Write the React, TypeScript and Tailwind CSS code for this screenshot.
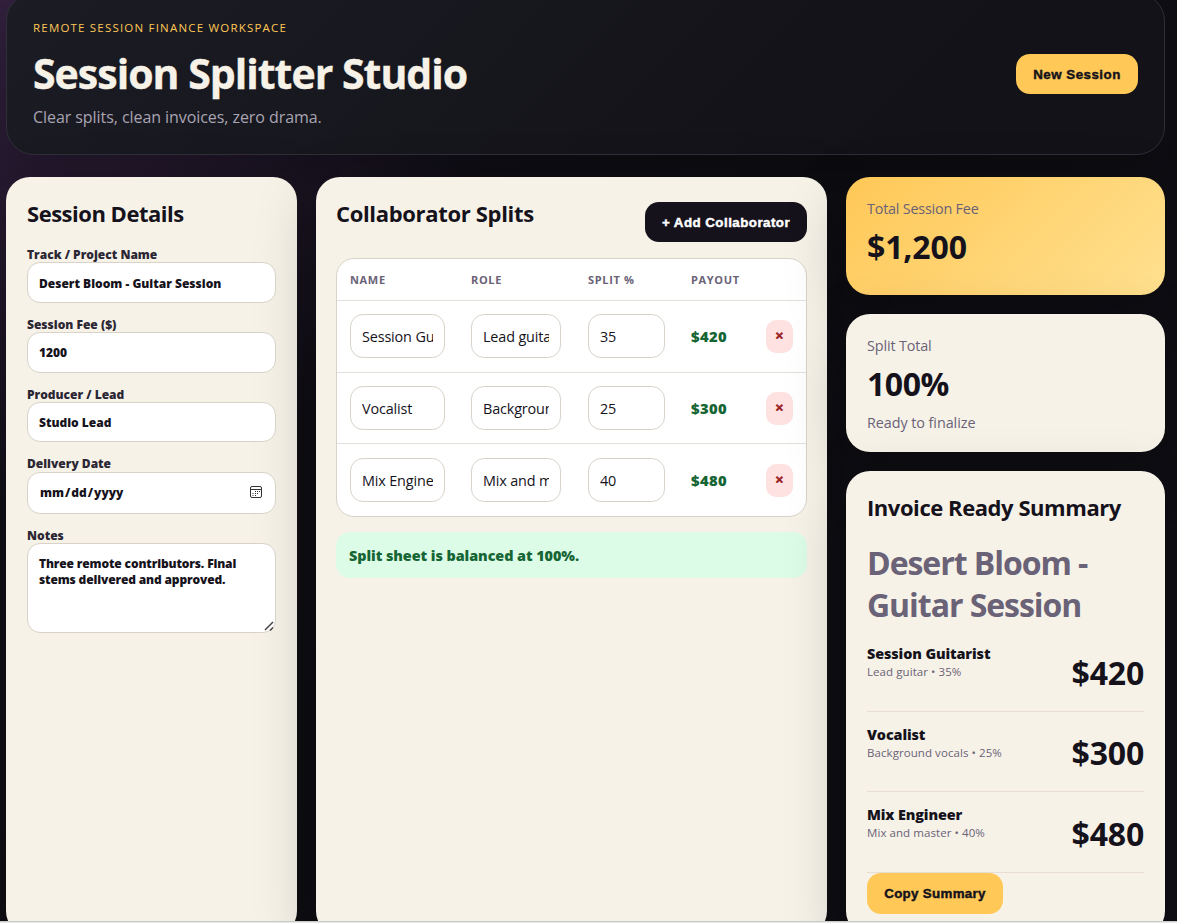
import { useState } from "react";

type Collaborator = {
    id: number;
    name: string;
    role: string;
    split: number;
};

const initialCollaborators: Collaborator[] = [
    { id: 1, name: "Session Guitarist", role: "Lead guitar", split: 35 },
    { id: 2, name: "Vocalist", role: "Background vocals", split: 25 },
    { id: 3, name: "Mix Engineer", role: "Mix and master", split: 40 },
];

const panelShadow = "shadow-[0_20px_60px_rgba(0,0,0,0.25)]";
const fieldClass =
    "block w-full rounded-[13px] border border-[#d8d2c9] bg-white px-[11px] text-[12px] font-extrabold text-[#15121b] outline-none";
const cellClass =
    "block h-[44px] rounded-[13px] border border-[#d8d2c9] bg-white px-[11px] pt-px text-[14.4px] tracking-[-0.01em] text-[#15121b] outline-none";
const buttonClass =
    "shrink-0 rounded-[14px] pt-[2px] text-center font-['Liberation_Sans',Arial,sans-serif] text-[13.33px] font-black whitespace-nowrap [-webkit-text-stroke:0.45px_currentColor]";

function CalendarIcon() {
    return (
        <svg className="pointer-events-none absolute top-[14px] right-[14px]" width="12" height="12" viewBox="0 0 12 12" fill="none" stroke="#333">
            <rect x="0.5" y="0.5" width="11" height="11" rx="1.5" />
            <path d="M1 3.5h10" />
            <path d="M5 5.5h1M7 5.5h1M9 5.5h1M2.5 7.5h1M5 7.5h1M7 7.5h1M2.5 9.5h1M5 9.5h1" />
        </svg>
    );
}

function ResizeHandle() {
    return (
        <svg className="pointer-events-none absolute right-[2px] bottom-[2px]" width="10" height="10" viewBox="0 0 10 10" stroke="#444" strokeWidth="1.5">
            <path d="M1 9 9 1M6 9.5 9 6.5" />
        </svg>
    );
}

function Field({ label, children }: { label: string; children: React.ReactNode }) {
    return (
        <label className="block">
            <span className="block h-[17.3px] text-[12px] leading-[19px] font-extrabold text-[#2b2633]">
                {label}
            </span>
            <span className="relative block">{children}</span>
        </label>
    );
}

export default function App() {
    const [collaborators, setCollaborators] = useState(initialCollaborators);
    const [project, setProject] = useState("Desert Bloom - Guitar Session");
    const [fee, setFee] = useState(1200);

    const total = collaborators.reduce((sum, c) => sum + c.split, 0);
    const payout = (split: number) => "$" + Math.round((fee * split) / 100).toLocaleString("en-US");

    const update = (id: number, changes: Partial<Collaborator>) => {
        setCollaborators(prev => prev.map(c => (c.id === id ? { ...c, ...changes } : c)));
    };

    const addCollaborator = () => {
        setCollaborators(prev => [...prev, { id: Date.now(), name: "", role: "", split: 0 }]);
    };

    return (
        <div className="flex h-[923px] w-[1177px] flex-col overflow-hidden bg-[#e9e9e9] font-['Open_Sans','Noto_Sans',sans-serif] text-[#15121b]">
            <div className="h-[921px] shrink-0 overflow-hidden bg-[radial-gradient(circle_at_0_-20px,#342140_0,transparent_520px),linear-gradient(135deg,#13111b,#0f0e13_50%,#100f16)] pr-3 pl-1.5">
                <header className="-mt-[7px] flex h-[162px] items-center justify-between rounded-[28px] border border-[#302e38] bg-[linear-gradient(135deg,#1b1c24,#131218_75%)] px-[26px] shadow-[0_20px_60px_rgba(0,0,0,0.25)]">
                    <div className="h-[114px]">
                        <p className="h-[24px] text-[11.5px] leading-[22px] tracking-[0.104em] text-[#ffc857]">
                            REMOTE SESSION FINANCE WORKSPACE
                        </p>
                        <h1 className="mt-[5px] h-[54px] text-[41px] leading-[54px] font-bold tracking-[-0.024em] text-[#f7f2e8] [-webkit-text-stroke:0.4px_currentColor]">
                            Session Splitter Studio
                        </h1>
                        <p className="mt-[5px] text-[16px] leading-[24px] tracking-[-0.004em] text-[#a9a4b3]">
                            Clear splits, clean invoices, zero drama.
                        </p>
                    </div>
                    <button className={`${buttonClass} h-10 w-[122px] bg-[#ffc857] tracking-[0.037em] text-[#15121b]`}>New Session</button>
                </header>

                <main className="mt-[22px] grid h-[758px] grid-cols-[291px_511px_319px] gap-[19px]">
                    <section className={`rounded-3xl bg-[#f7f2e8] px-[21px] pt-5 ${panelShadow}`}>
                        <h2 className="h-12 text-[22px] leading-[32px] font-bold tracking-[-0.022em]">Session Details</h2>
                        <div className="flex flex-col gap-3">
                            <Field label="Track / Project Name">
                                <input className={`${fieldClass} h-[40.5px] pt-px`} value={project} onChange={e => setProject(e.target.value)} />
                            </Field>
                            <Field label="Session Fee ($)">
                                <input className={`${fieldClass} h-[40.5px]`} value={fee} onChange={e => setFee(Number(e.target.value))} />
                            </Field>
                            <Field label="Producer / Lead">
                                <input className={`${fieldClass} h-[40.5px]`} defaultValue="Studio Lead" />
                            </Field>
                            <Field label="Delivery Date">
                                <input
                                    type="date"
                                    className={`${fieldClass} h-[42.5px] [&::-webkit-calendar-picker-indicator]:opacity-0`}
                                />
                                <CalendarIcon />
                            </Field>
                            <Field label="Notes">
                                <textarea
                                    className={`${fieldClass} h-[90px] resize-none py-[12px] leading-[16px] tracking-[-0.012em]`}
                                    defaultValue="Three remote contributors. Final stems delivered and approved."
                                />
                                <ResizeHandle />
                            </Field>
                        </div>
                    </section>

                    <section className={`rounded-3xl bg-[#f7f2e8] px-5 pt-5 ${panelShadow}`}>
                        <div className="flex h-[61px] items-start justify-between">
                            <h2 className="text-[22px] leading-[32px] font-bold tracking-[-0.015em]">Collaborator Splits</h2>
                            <button onClick={addCollaborator} className={`${buttonClass} mt-[5px] h-10 w-[162px] bg-[#15121b] tracking-[0.035em] text-white`}>
                                + Add Collaborator
                            </button>
                        </div>
                        <div className="overflow-hidden rounded-[18px] border border-[#d8d2c9] bg-white">
                            <div className="grid h-[42px] grid-cols-[121px_117px_103px_75px_27px] items-center border-b border-[#e3dfd9] pt-px pl-[13px] text-[11px] font-bold tracking-[0.06em] text-[#6a6277]">
                                <span>NAME</span>
                                <span>ROLE</span>
                                <span>SPLIT %</span>
                                <span>PAYOUT</span>
                            </div>
                            {collaborators.map(c => (
                                <div
                                    key={c.id}
                                    className="grid h-[71.7px] grid-cols-[121px_117px_103px_75px_27px] items-center border-b border-[#e3dfd9] pl-[13px] last:border-b-0"
                                >
                                    <input className={`${cellClass} w-[95px]`} value={c.name} onChange={e => update(c.id, { name: e.target.value })} />
                                    <input className={`${cellClass} w-[90px]`} value={c.role} onChange={e => update(c.id, { role: e.target.value })} />
                                    <input
                                        className={`${cellClass} w-[77px]`}
                                        value={c.split}
                                        onChange={e => update(c.id, { split: Number(e.target.value) })}
                                    />
                                    <span className="text-[14.8px] font-extrabold tracking-[0.028em] text-[#166534]">{payout(c.split)}</span>
                                    <button
                                        onClick={() => setCollaborators(prev => prev.filter(p => p.id !== c.id))}
                                        className="h-[33px] rounded-[10px] bg-[#fee2e2] font-['Liberation_Sans',Arial,sans-serif] text-[13.33px] font-black text-[#991b1b] [-webkit-text-stroke:0.5px_currentColor]"
                                    >
                                        ×
                                    </button>
                                </div>
                            ))}
                        </div>
                        <div className="mt-[15px] flex h-[46px] items-center rounded-[14px] bg-[#dcfce7] px-[13px] pt-px text-[14.4px] font-extrabold tracking-[-0.004em] text-[#166534]">
                            {total === 100 ? "Split sheet is balanced at 100%." : `Split sheet is at ${total}%.`}
                        </div>
                    </section>

                    <aside className="flex flex-col gap-[19px]">
                        <div className={`h-[118px] shrink-0 rounded-3xl bg-[linear-gradient(135deg,#ffc857,#ffe08f)] px-[21px] pt-[20px] ${panelShadow}`}>
                            <p className="text-[14.4px] leading-[24px] tracking-[-0.015em] text-[#6a6277]">Total Session Fee</p>
                            <p className="mt-[5px] text-[32px] leading-[42px] font-bold tracking-[-0.004em]">${fee.toLocaleString("en-US")}</p>
                        </div>
                        <div className={`h-[138px] shrink-0 rounded-3xl bg-[#f7f2e8] px-[21px] pt-[20px] ${panelShadow}`}>
                            <p className="text-[14.4px] leading-[24px] tracking-[-0.01em] text-[#6a6277]">Split Total</p>
                            <p className="mt-[5px] text-[32px] leading-[42px] font-bold tracking-[-0.015em]">{total}%</p>
                            <p className="mt-[6px] text-[14.4px] leading-[24px] tracking-[-0.005em] text-[#6a6277]">
                                {total === 100 ? "Ready to finalize" : "Needs review"}
                            </p>
                        </div>
                        <div className={`flex-1 rounded-3xl bg-[#f7f2e8] px-[21px] pt-5 ${panelShadow}`}>
                            <h2 className="text-[22px] leading-[32px] font-bold tracking-[-0.02em]">Invoice Ready Summary</h2>
                            <p className="mt-[19px] text-[32px] leading-[42px] font-bold tracking-[-0.033em] text-[#6a6277]">{project}</p>
                            <div className="mt-[5px]">
                                {collaborators.map(c => (
                                    <div key={c.id} className="flex h-[80.5px] items-start justify-between border-b border-[#e8ddd4]">
                                        <div className="pt-[13px]">
                                            <p className="text-[14.4px] leading-[19px] font-extrabold tracking-[-0.008em]">{c.name}</p>
                                            <p className="text-[11.5px] leading-[17px] tracking-[0.006em] text-[#6a6277]">
                                                {c.role} • {c.split}%
                                            </p>
                                        </div>
                                        <p className="pt-[20.5px] text-[32px] leading-[42px] font-bold tracking-[-0.006em]">{payout(c.split)}</p>
                                    </div>
                                ))}
                            </div>
                            <button className={`${buttonClass} h-[41px] w-[136px] bg-[#ffc857] tracking-[0.024em] text-[#15121b]`}>Copy Summary</button>
                        </div>
                    </aside>
                </main>
            </div>
            <div className="h-px shrink-0 bg-[#c8cac9]" />
        </div>
    );
}
